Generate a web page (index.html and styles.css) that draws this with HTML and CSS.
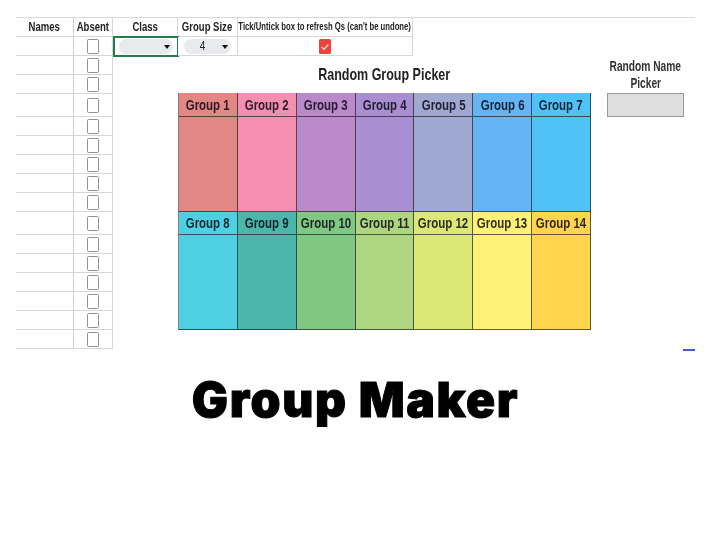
FILE: index.html
```html
<!DOCTYPE html>
<html lang="en">
<head>
<meta charset="utf-8">
<title>Group Maker</title>
<link rel="stylesheet" href="styles.css">
</head>
<body>
<main class="slide">
  <section class="sheet">
    <div class="cell name head"><span class="sq">Names</span></div>
    <div class="cell absent head"><span class="sq">Absent</span></div>
    <div class="cell head"><span class="sq">Class</span></div>
    <div class="cell head"><span class="sq">Group Size</span></div>
    <div class="cell head tick-head"><span class="sq">Tick/Untick box to refresh Qs (can't be undone)</span></div>

    <div class="cell name r2"></div><div class="cell absent r2"><i class="box"></i></div>
    <div class="cell selected r2"><div class="chip chip-class"><b class="arrow"></b></div></div>
    <div class="cell r2 size"><div class="chip chip-size"><span class="sq num">4</span><b class="arrow"></b></div></div>
    <div class="cell r2 tick">
      <svg class="checked" width="12" height="15" viewBox="0 0 12 15"><rect width="12" height="15" rx="1.5" fill="#e8453c"/><path d="M2.6 7.8l2.4 2.5 4.4-5" fill="none" stroke="#ffe9e6" stroke-width="1.2"/></svg>
    </div>

    <div class="cell name r3"></div><div class="cell absent r3"><i class="box"></i></div>
    <div class="cell name r4"></div><div class="cell absent r4"><i class="box"></i></div>
    <div class="cell name r5"></div><div class="cell absent r5"><i class="box"></i></div>
    <div class="cell name r6"></div><div class="cell absent r6"><i class="box"></i></div>
    <div class="cell name r7"></div><div class="cell absent r7"><i class="box"></i></div>
    <div class="cell name r8"></div><div class="cell absent r8"><i class="box"></i></div>
    <div class="cell name r9"></div><div class="cell absent r9"><i class="box"></i></div>
    <div class="cell name r10"></div><div class="cell absent r10"><i class="box"></i></div>
    <div class="cell name r11"></div><div class="cell absent r11"><i class="box"></i></div>
    <div class="cell name r12"></div><div class="cell absent r12"><i class="box"></i></div>
    <div class="cell name r13"></div><div class="cell absent r13"><i class="box"></i></div>
    <div class="cell name r14"></div><div class="cell absent r14"><i class="box"></i></div>
    <div class="cell name r15"></div><div class="cell absent r15"><i class="box"></i></div>
    <div class="cell name r16"></div><div class="cell absent r16"><i class="box"></i></div>
    <div class="cell name r17"></div><div class="cell absent r17"><i class="box"></i></div>

    <h2 class="picker-title"><span class="sq">Random Group Picker</span></h2>

    <div class="groups">
      <div class="gh g1"><span class="sq">Group 1</span></div>
      <div class="gh g2"><span class="sq">Group 2</span></div>
      <div class="gh g3"><span class="sq">Group 3</span></div>
      <div class="gh g4"><span class="sq">Group 4</span></div>
      <div class="gh g5"><span class="sq">Group 5</span></div>
      <div class="gh g6"><span class="sq">Group 6</span></div>
      <div class="gh g7"><span class="sq">Group 7</span></div>
      <div class="gb g1"></div><div class="gb g2"></div><div class="gb g3"></div><div class="gb g4"></div><div class="gb g5"></div><div class="gb g6"></div><div class="gb g7"></div>
      <div class="gh g8"><span class="sq">Group 8</span></div>
      <div class="gh g9"><span class="sq">Group 9</span></div>
      <div class="gh g10"><span class="sq">Group 10</span></div>
      <div class="gh g11"><span class="sq">Group 11</span></div>
      <div class="gh g12"><span class="sq">Group 12</span></div>
      <div class="gh g13"><span class="sq">Group 13</span></div>
      <div class="gh g14"><span class="sq">Group 14</span></div>
      <div class="gb g8"></div><div class="gb g9"></div><div class="gb g10"></div><div class="gb g11"></div><div class="gb g12"></div><div class="gb g13"></div><div class="gb g14"></div>
    </div>

    <div class="name-title"><span class="sq">Random Name</span><span class="sq">Picker</span></div>
    <div class="name-box"></div>
    <div class="blue-dash"></div>
  </section>
  <h1 class="title">Group Maker</h1>
</main>
</body>
</html>
```
FILE: styles.css
```css
* { box-sizing: border-box; }
html, body { margin: 0; background: #fff; }
body { width: 720px; height: 540px; overflow: hidden; font-family: "Liberation Sans", Arial, sans-serif; color: #222; }
.slide { padding: 17px 25px 0 16px; }

.sheet {
  filter: blur(0.35px);
  display: grid;
  grid-template-columns: 57px 40px 65px 60px 175px 178px 16px 77px 11px;
  grid-template-rows: 19px 19px 19px 19px 23px 19px 19px 19px 19px 19px 23px 19px 19px 19px 19px 19px 19px 2px;
  border-top: 1px solid #d8d8d8;
}
.sq { display: inline-block; white-space: nowrap; transform: scaleX(.74); }

.cell { display: flex; align-items: center; justify-content: center; border-bottom: 1px solid #d6d6d6; background: #fff; }
.head { font-size: 12.9px; font-weight: 700; border-right: 1px solid #d6d6d6; padding-bottom: 1px; }
.name { grid-column: 1; border-right: 0; }
.absent { grid-column: 2; border-left: 1px solid #cfcfcf; border-right: 1px solid #d6d6d6; }
.head.name { border-right: 0; }
.tick-head { font-size: 10.4px; }
.tick, .size { border-right: 1px solid #d6d6d6; }
.tick { grid-column: 5; grid-row: 2; }
.size { grid-column: 4; grid-row: 2; padding: 0 6px; border-left: 0; }
.selected { grid-column: 3; grid-row: 2; border: 2px solid #1f7f4c; margin: -1px -1px -1px 0; padding: 0 4px; }

.r2 { grid-row: 2; } .r3 { grid-row: 3; } .r4 { grid-row: 4; } .r5 { grid-row: 5; } .r6 { grid-row: 6; }
.r7 { grid-row: 7; } .r8 { grid-row: 8; } .r9 { grid-row: 9; } .r10 { grid-row: 10; } .r11 { grid-row: 11; }
.r12 { grid-row: 12; } .r13 { grid-row: 13; } .r14 { grid-row: 14; } .r15 { grid-row: 15; } .r16 { grid-row: 16; } .r17 { grid-row: 17; }

.box { display: block; width: 12px; height: 15px; border: 1.8px solid #929292; border-radius: 1.5px; background: #fff; }
.checked { display: block; }

.chip { position: relative; display: flex; align-items: center; justify-content: center; width: 100%; height: 15px; border-radius: 8px; background: #e8eaed; font-size: 12.5px; font-weight: 400; }
.chip-size { padding-right: 10px; }
.num { transform: scaleX(.8); }
.arrow { position: absolute; right: 3px; top: 6px; width: 0; height: 0; border-left: 3.5px solid transparent; border-right: 3.5px solid transparent; border-top: 4px solid #111; }

.picker-title { grid-column: 4 / 7; grid-row: 3 / 5; margin: 0; align-self: center; text-align: center; font-size: 16.9px; line-height: 18px; font-weight: 700; color: #222; }

.groups {
  grid-column: 4 / 7; grid-row: 5 / 18; margin-top: -1px; align-self: start;
  display: grid;
  grid-template-columns: repeat(7, minmax(0, 1fr));
  grid-template-rows: 24px 95px 23px 95px;
  border-left: 1px solid rgba(40, 40, 40, .6);
}
.gh, .gb { border-right: 1px solid rgba(30, 30, 30, .7); border-bottom: 1px solid rgba(30, 30, 30, .7); }
.gh { display: flex; align-items: center; justify-content: center; font-size: 15.5px; font-weight: 700; color: rgba(10, 10, 20, .85); }

.g1 { background: #e38784; } .g2 { background: #f48fb1; } .g3 { background: #ba89c9; } .g4 { background: #a98fd2; }
.g5 { background: #9fa8d1; } .g6 { background: #64b5f6; } .g7 { background: #4fc3f7; } .g8 { background: #4dd0e1; }
.g9 { background: #4db6ac; } .g10 { background: #81c784; } .g11 { background: #aed581; } .g12 { background: #dce775; }
.g13 { background: #fff176; } .g14 { background: #ffd54f; }

.name-title { grid-column: 8; grid-row: 3 / 5; align-self: center; display: flex; flex-direction: column; align-items: center; font-size: 13.8px; line-height: 17px; font-weight: 700; color: #333; }
.name-box { grid-column: 8; grid-row: 5; height: 24px; margin-top: -1px; background: #dedede; border: 1.5px solid #9a9a9a; }
.blue-dash { grid-column: 8 / 10; grid-row: 18; justify-self: end; width: 12px; height: 2px; background: #3f5fd0; }

.title { margin: 21px 0 0; text-align: center; font-family: Inter, "Liberation Sans", sans-serif; font-weight: 900; font-size: 48px; line-height: 56px; color: #000; -webkit-text-stroke: 1px #000; letter-spacing: 1.6px; filter: blur(0.3px); }
```
